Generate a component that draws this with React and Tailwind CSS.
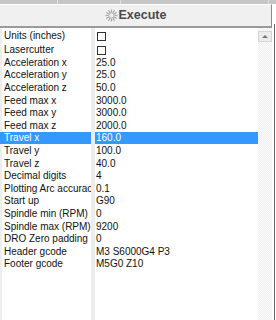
const rows = [
  { label: 'Units (inches)', check: true },
  { label: 'Lasercutter', check: true },
  { label: 'Acceleration x', value: '25.0' },
  { label: 'Acceleration y', value: '25.0' },
  { label: 'Acceleration z', value: '50.0' },
  { label: 'Feed max x', value: '3000.0' },
  { label: 'Feed max y', value: '3000.0' },
  { label: 'Feed max z', value: '2000.0' },
  { label: 'Travel x', value: '160.0', selected: true },
  { label: 'Travel y', value: '100.0' },
  { label: 'Travel z', value: '40.0' },
  { label: 'Decimal digits', value: '4' },
  { label: 'Plotting Arc accuracy', value: '0.1' },
  { label: 'Start up', value: 'G90' },
  { label: 'Spindle min (RPM)', value: '0' },
  { label: 'Spindle max (RPM)', value: '9200' },
  { label: 'DRO Zero padding', value: '0' },
  { label: 'Header gcode', value: 'M3 S6000G4 P3' },
  { label: 'Footer gcode', value: 'M5G0 Z10' },
];

function GearIcon() {
  const spokes = Array.from({ length: 12 }, (_, i) => i * 30);
  return (
    <svg width="13" height="13" viewBox="0 0 13 13" className="shrink-0">
      {spokes.map(a => {
        const r = (a * Math.PI) / 180;
        return (
          <line
            key={a}
            x1={6.5 + Math.cos(r) * 3}
            y1={6.5 + Math.sin(r) * 3}
            x2={6.5 + Math.cos(r) * 6}
            y2={6.5 + Math.sin(r) * 6}
            stroke="#a8a8a8"
            strokeWidth="1.2"
          />
        );
      })}
      <circle cx="6.5" cy="6.5" r="2.6" fill="none" stroke="#b0b0b0" strokeWidth="1" />
    </svg>
  );
}

export default function App() {
  return (
    <div
      className="w-[276px] h-[320px] bg-white overflow-hidden flex flex-col text-[10px] text-[#111]"
      style={{ fontFamily: "'Liberation Sans', Arial, sans-serif" }}
    >
      {/* top strip */}
      <div className="h-[4px] shrink-0 bg-[#c6c6c6] flex">
        <div className="w-[57px]" />
        <div className="w-[1px] bg-[#e2e2e2]" />
        <div className="w-[62px]" />
        <div className="w-[1px] bg-[#e2e2e2]" />
        <div className="w-[147px]" />
        <div className="w-[1px] bg-[#e2e2e2]" />
      </div>

      <div className="flex flex-1 min-h-0">
        <div className="w-[272px] flex flex-col">
          {/* execute button */}
          <div className="h-[24px] shrink-0 bg-[#f0f0f0] border-t border-t-white border-b-2 border-b-[#9a9a9a] border-r border-r-[#8c8c8c] flex items-center justify-center gap-[1px]">
            <GearIcon />
            <span className="font-bold text-[12.5px] text-[#4a4a4a] leading-none">Execute</span>
          </div>

          <div className="flex flex-1 min-h-0">
            {/* property grid */}
            <div className="w-[258px] flex flex-col">
              {rows.map((row, i) => (
                <div key={row.label} className={`flex ${i < 2 ? 'h-[14px]' : 'h-[12.6px]'} shrink-0`}>
                  <div
                    className={`w-[91px] pl-[3px] flex items-center whitespace-nowrap overflow-hidden border-l-2 ${
                      row.selected ? 'bg-[#3399ff] border-l-[#3399ff] text-white' : 'border-l-[#eeeeee]'
                    }`}
                  >
                    <span className="pl-[1px] -ml-[2px]">{row.label}</span>
                  </div>
                  <div className="w-[4px] bg-[#ededed]" />
                  <div
                    className={`flex-1 flex items-center pl-[1px] whitespace-nowrap ${
                      row.selected ? 'bg-[#3399ff] text-white' : ''
                    }`}
                  >
                    {row.check ? (
                      <div className="w-[9px] h-[9px] border border-[#333] bg-white ml-[1px] mt-[2px]" />
                    ) : (
                      row.value
                    )}
                  </div>
                </div>
              ))}
              <div className="flex flex-1">
                <div className="w-[91px] border-l-2 border-l-[#eeeeee]" />
                <div className="w-[4px] bg-[#ededed]" />
                <div className="flex-1" />
              </div>
            </div>

            {/* scrollbar */}
            <div className="w-[14px] flex flex-col pt-[3px] bg-[repeating-conic-gradient(#efefef_0_25%,#fbfbfb_0_50%)] bg-[length:2px_2px]">
              <div className="h-[11px] shrink-0 bg-[#ececec] border border-[#d6d6d6] flex items-center justify-center">
                <div className="w-0 h-0 border-l-[3px] border-r-[3px] border-b-[3px] border-l-transparent border-r-transparent border-b-[#777]" />
              </div>
            </div>
          </div>
        </div>

        {/* right edge */}
        <div className="w-[4px] flex">
          <div className="w-[2px] bg-white" />
          <div className="w-[1px] mt-[20px] bg-[#666]" />
          <div className="w-[1px] bg-white" />
        </div>
      </div>
    </div>
  );
}
